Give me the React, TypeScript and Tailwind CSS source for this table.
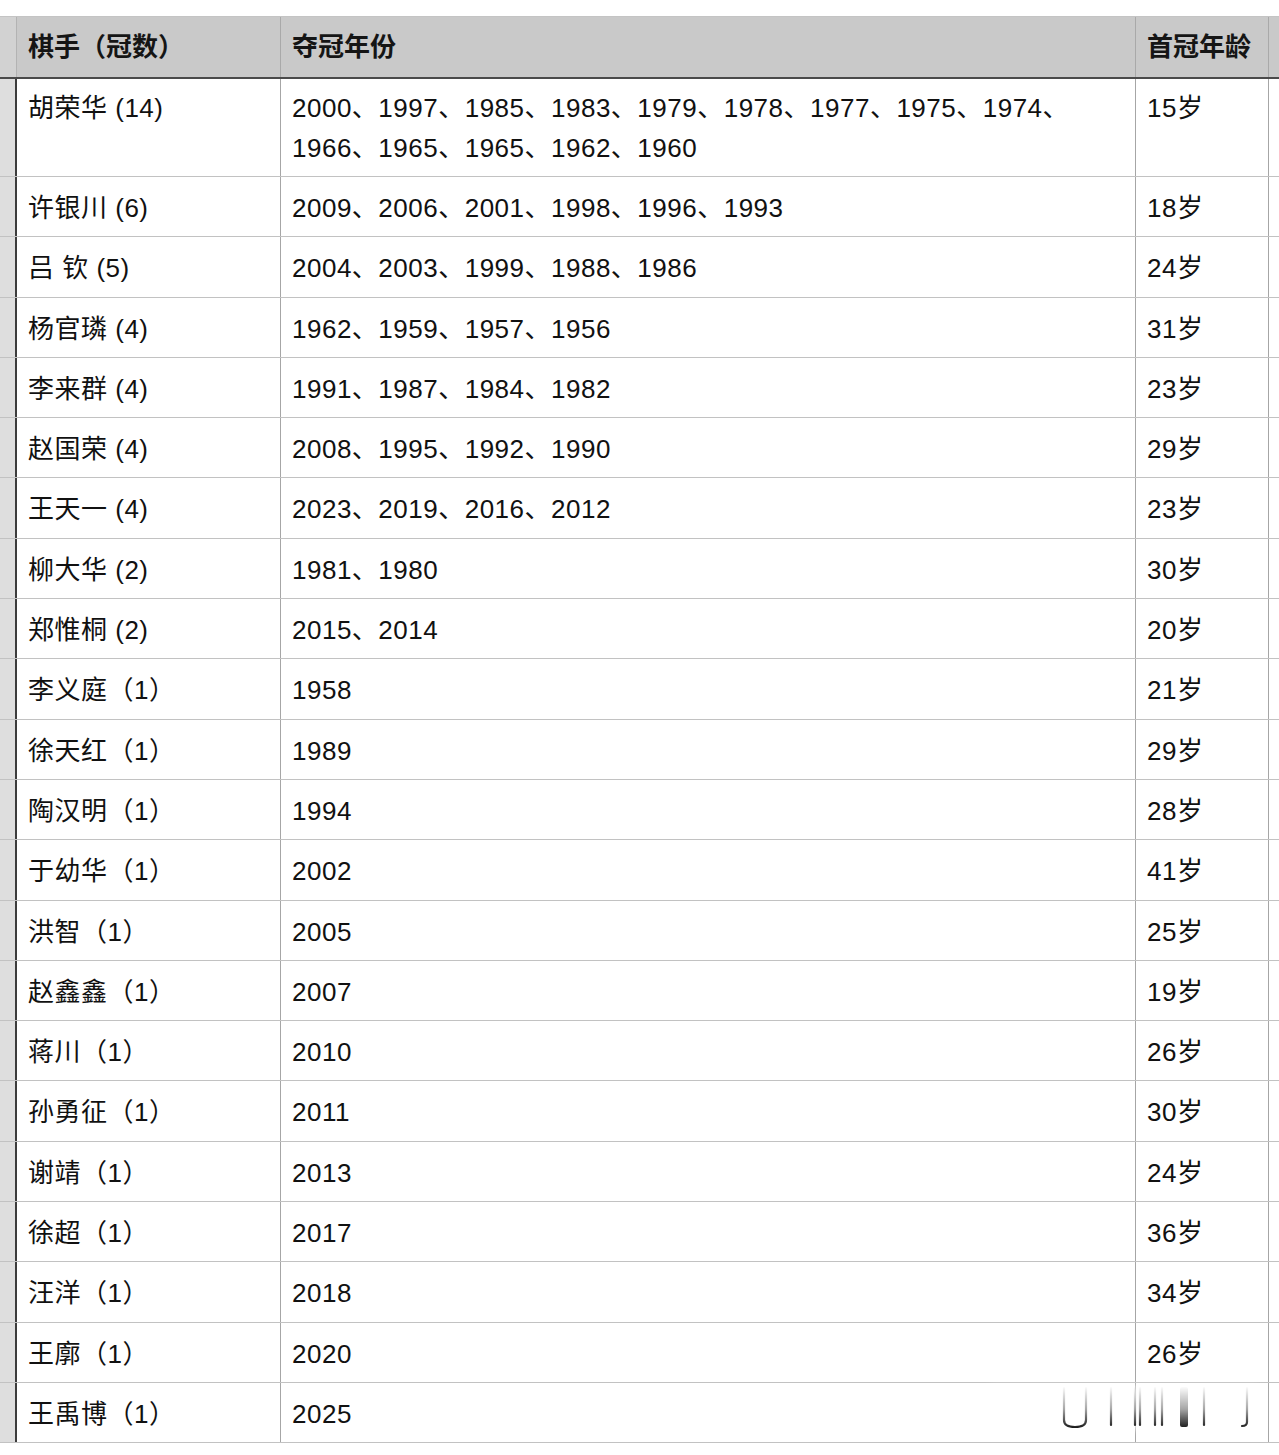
const rows: { name: string; years: string[]; age: string }[] = [
  {
    name: "胡荣华 (14)",
    years: [
      "2000、1997、1985、1983、1979、1978、1977、1975、1974、",
      "1966、1965、1965、1962、1960",
    ],
    age: "15岁",
  },
  { name: "许银川 (6)", years: ["2009、2006、2001、1998、1996、1993"], age: "18岁" },
  { name: "吕 钦 (5)", years: ["2004、2003、1999、1988、1986"], age: "24岁" },
  { name: "杨官璘 (4)", years: ["1962、1959、1957、1956"], age: "31岁" },
  { name: "李来群 (4)", years: ["1991、1987、1984、1982"], age: "23岁" },
  { name: "赵国荣 (4)", years: ["2008、1995、1992、1990"], age: "29岁" },
  { name: "王天一 (4)", years: ["2023、2019、2016、2012"], age: "23岁" },
  { name: "柳大华 (2)", years: ["1981、1980"], age: "30岁" },
  { name: "郑惟桐 (2)", years: ["2015、2014"], age: "20岁" },
  { name: "李义庭（1）", years: ["1958"], age: "21岁" },
  { name: "徐天红（1）", years: ["1989"], age: "29岁" },
  { name: "陶汉明（1）", years: ["1994"], age: "28岁" },
  { name: "于幼华（1）", years: ["2002"], age: "41岁" },
  { name: "洪智（1）", years: ["2005"], age: "25岁" },
  { name: "赵鑫鑫（1）", years: ["2007"], age: "19岁" },
  { name: "蒋川（1）", years: ["2010"], age: "26岁" },
  { name: "孙勇征（1）", years: ["2011"], age: "30岁" },
  { name: "谢靖（1）", years: ["2013"], age: "24岁" },
  { name: "徐超（1）", years: ["2017"], age: "36岁" },
  { name: "汪洋（1）", years: ["2018"], age: "34岁" },
  { name: "王廓（1）", years: ["2020"], age: "26岁" },
  { name: "王禹博（1）", years: ["2025"], age: "" },
];

// blurred watermark sitting over the last row
const Watermark = () => (
  <>
    <div className="absolute left-[990px] top-[1388px] w-[270px] h-[40px] bg-white/90 blur-[4px]" />
    <svg
      className="absolute left-[1040px] top-[1380px] blur-[0.6px]"
      width="220"
      height="55"
      viewBox="0 0 220 55"
      fill="none"
    >
      <defs>
        <linearGradient id="wm" x1="0" y1="6" x2="0" y2="48" gradientUnits="userSpaceOnUse">
          <stop offset="0" stopColor="#000" stopOpacity="0" />
          <stop offset="0.55" stopColor="#000" stopOpacity="0.35" />
          <stop offset="1" stopColor="#000" stopOpacity="0.9" />
        </linearGradient>
      </defs>
      <g stroke="url(#wm)" strokeWidth="2.2" strokeLinecap="round">
        <path d="M24 8 V40 Q24 47 35 47 Q46 47 46 40 V8" />
        <path d="M71 8 V45" />
        <path d="M95 8 V45" />
        <path d="M100 8 V45" />
        <path d="M115 8 V45" />
        <path d="M122 8 V45" />
        <path d="M164 8 V45" />
        <path d="M207 8 V42 Q207 46 202 46" />
      </g>
      <rect x="140" y="7" width="8" height="40" rx="2" fill="url(#wm)" />
    </svg>
  </>
);

const App = () => {
  return (
    <div className="relative w-[1279px] h-[1455px] bg-white overflow-hidden font-['Liberation_Sans','Noto_Sans_CJK_SC',sans-serif] text-[#111]">
      {/* header */}
      <div className="mt-[16px] flex h-[63px] border-t border-b-2 border-t-[#c4c4c4] border-b-[#4a4a4a] bg-[#c9c9c9] text-[26px] font-bold text-[#151515]">
        <div className="w-[17px] shrink-0 border-r border-[#b3b3b3] bg-[#d2d2d2]" />
        <div className="flex w-[264px] shrink-0 items-center border-r border-[#a9a9a9] pl-[11px]">
          棋手（冠数）
        </div>
        <div className="flex w-[855px] shrink-0 items-center border-r border-[#a9a9a9] pl-[11px]">
          夺冠年份
        </div>
        <div className="flex w-[133px] shrink-0 items-center border-r border-[#a9a9a9] pl-[11px]">
          首冠年龄
        </div>
        <div className="flex-1" />
      </div>

      {/* body */}
      <div className="flex flex-col">
        {rows.map((r, i) => (
          <div
            key={r.name}
            className={`flex border-b border-[#c2c2c2] text-[26px] leading-[40px] tracking-[0.5px] ${
              i === 0 ? "h-[98px]" : "h-[60.3px]"
            }`}
          >
            <div className="w-[17px] shrink-0 border-r-2 border-[#3c3c3c] bg-[#dedede]" />
            <div
              className={`w-[264px] shrink-0 border-r border-[#a6a6a6] pl-[11px] whitespace-nowrap ${
                i === 0 ? "pt-[9px]" : "pt-[11px]"
              }`}
            >
              {r.name}
            </div>
            <div
              className={`w-[855px] shrink-0 border-r border-[#a6a6a6] pl-[11px] whitespace-nowrap ${
                i === 0 ? "pt-[9px]" : "pt-[11px]"
              }`}
            >
              {r.years.map((y) => (
                <div key={y}>{y}</div>
              ))}
            </div>
            <div
              className={`w-[133px] shrink-0 border-r border-[#a6a6a6] pl-[11px] ${
                i === 0 ? "pt-[9px]" : "pt-[11px]"
              }`}
            >
              {r.age}
            </div>
            <div className="flex-1" />
          </div>
        ))}
      </div>

      <Watermark />
    </div>
  );
};

export default App;
